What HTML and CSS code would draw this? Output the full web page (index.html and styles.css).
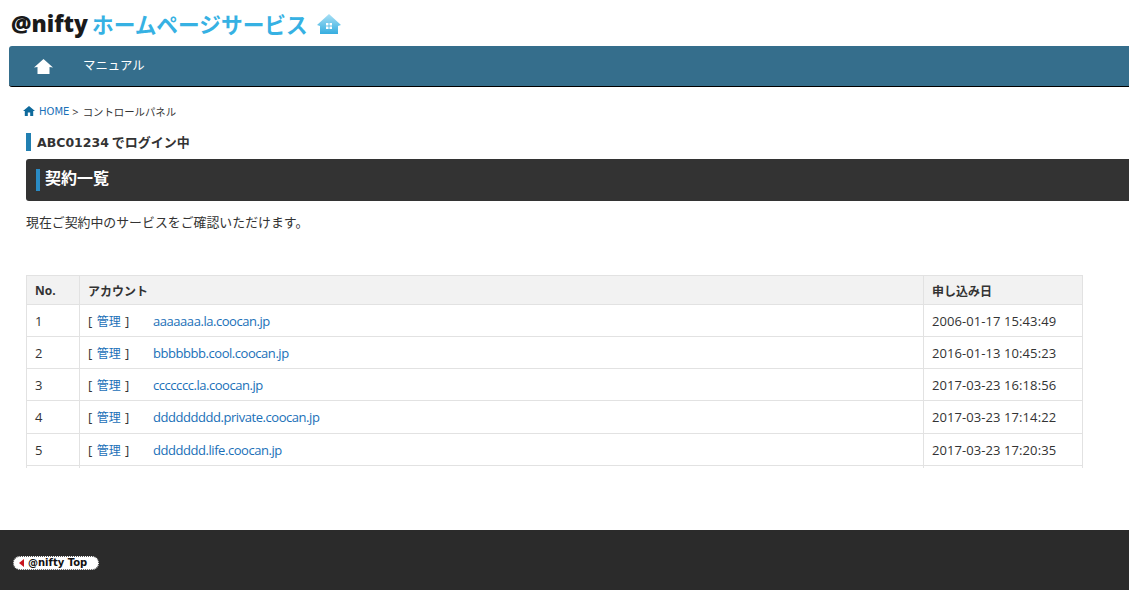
FILE: index.html
```html
<!DOCTYPE html>
<html lang="ja">
<head>
<meta charset="utf-8">
<title>コントロールパネル</title>
<link rel="stylesheet" href="styles.css">
</head>
<body>
<header class="logo">
  <span class="logo-nifty">@nifty</span>
  <span class="logo-service">ホームページサービス</span>
  <svg class="logo-house" width="24" height="20" viewBox="0 0 24 20">
    <defs><linearGradient id="lg" x1="0" y1="0" x2="0" y2="1"><stop offset="0" stop-color="#a9e0f5"/><stop offset="1" stop-color="#36aee0"/></linearGradient></defs>
    <path d="M12 0 L24 11 L21 12 L21 20 L3 20 L3 12 L0 11 Z" fill="url(#lg)"/>
    <path d="M9 9h6v6H9z" fill="#fff"/>
    <path d="M12 9v6M9 12h6" stroke="#5fbfe6" stroke-width="1"/>
  </svg>
</header>
<nav class="nav">
  <svg class="nav-home" width="19" height="15" viewBox="0 0 19 15"><path d="M9.5 0 L19 8.5 L15.5 8 L15.5 15 L3.5 15 L3.5 8 L0 8.5 Z" fill="#fff"/></svg>
  <a class="nav-link">マニュアル</a>
</nav>
<div class="crumbs">
  <svg class="crumb-home" width="12" height="10" viewBox="0 0 12 10"><path d="M6 0 L12 5 L10.2 5 L10.2 10 L7.2 10 L7.2 6.5 L4.8 6.5 L4.8 10 L1.8 10 L1.8 5 L0 5 Z" fill="#0f6a9c"/></svg>
  <a class="crumb-link">HOME</a><span class="crumb-sep">&gt;</span><span class="crumb-rest">コントロールパネル</span>
</div>
<main class="main">
  <h3 class="login"><span class="login-id">ABC01234</span> でログイン中</h3>
  <h2 class="title"><span class="title-text">契約一覧</span></h2>
  <p class="lead">現在ご契約中のサービスをご確認いただけます。</p>
  <table class="list">
    <thead>
      <tr><th class="c-no">No.</th><th>アカウント</th><th class="c-date">申し込み日</th></tr>
    </thead>
    <tbody>
      <tr><td>1</td><td><span class="manage">[ <a>管理</a> ]</span><a class="domain">aaaaaaa.la.coocan.jp</a></td><td class="date">2006-01-17 15:43:49</td></tr>
      <tr><td>2</td><td><span class="manage">[ <a>管理</a> ]</span><a class="domain">bbbbbbb.cool.coocan.jp</a></td><td class="date">2016-01-13 10:45:23</td></tr>
      <tr><td>3</td><td><span class="manage">[ <a>管理</a> ]</span><a class="domain">ccccccc.la.coocan.jp</a></td><td class="date">2017-03-23 16:18:56</td></tr>
      <tr class="row-tall"><td>4</td><td><span class="manage">[ <a>管理</a> ]</span><a class="domain">ddddddddd.private.coocan.jp</a></td><td class="date">2017-03-23 17:14:22</td></tr>
      <tr><td>5</td><td><span class="manage">[ <a>管理</a> ]</span><a class="domain">ddddddd.life.coocan.jp</a></td><td class="date">2017-03-23 17:20:35</td></tr>
      <tr class="tail"><td></td><td></td><td></td></tr>
    </tbody>
  </table>
</main>
<footer class="footer">
  <a class="top-btn"><span class="top-arrow"></span>@nifty Top</a>
</footer>
</body>
</html>
```
FILE: styles.css
```css
* { box-sizing: border-box; }
html, body { margin: 0; padding: 0; }
body {
  width: 1129px;
  height: 590px;
  overflow: hidden;
  background: #fff;
  color: #333;
  font-family: "Open Sans", "Noto Sans CJK JP", sans-serif;
  font-size: 13px;
}
.logo {
  height: 46px;
  padding: 2px 0 0 11px;
  display: flex;
  align-items: center;
}
.logo-nifty {
  font-family: "Open Sans", "Liberation Sans", sans-serif;
  font-weight: 800;
  font-size: 22.8px;
  line-height: 30px;
  color: #1a1a1a;
}
.logo-service {
  font-family: "Noto Sans CJK JP", sans-serif;
  font-weight: 700;
  font-size: 21.7px;
  line-height: 30px;
  color: #36b1e3;
  margin-left: 4px;
}
.logo-house { margin-left: 9px; }
.nav {
  margin-left: 9px;
  height: 41px;
  background: #356e8c;
  border-bottom: 1px solid #000;
  border-radius: 3px 0 0 3px;
  display: flex;
  align-items: center;
  padding: 0 0 2px 25px;
}
.nav-home { margin-top: 3px; }
.nav-link {
  margin-left: 30px;
  color: #fff;
  font-family: "Noto Sans CJK JP", sans-serif;
  font-size: 12.4px;
  line-height: 18px;
}
.crumbs {
  margin: 16px 0 0 23px;
  height: 16px;
  display: flex;
  align-items: center;
  color: #333;
}
.crumb-home { margin-right: 4px; }
.crumb-link { color: #1a70b8; font-family: "DejaVu Sans", sans-serif; font-size: 10px; }
.crumb-sep { margin: 0 4px 0 3px; font-size: 11px; }
.crumb-rest {
  font-family: "Noto Sans CJK JP", sans-serif;
  font-size: 10.4px;
}
.main { margin: 14px 0 0 26px; }
.login {
  margin: 0;
  height: 18px;
  line-height: 18px;
  border-left: 5px solid #217fb1;
  padding-left: 6px;
  font-size: 13px;
  font-weight: 700;
  color: #333;
  font-family: "Noto Sans CJK JP", sans-serif;
}
.login-id { font-family: "DejaVu Sans", sans-serif; font-size: 12.5px; }
.title {
  margin: 8px 0 0;
  height: 42px;
  background: #333;
  border-radius: 3px 0 0 3px;
  padding: 10px 0 0 10px;
}
.title-text {
  display: block;
  height: 22px;
  line-height: 17px;
  border-left: 4px solid #2a8bc4;
  padding-left: 5px;
  color: #fff;
  font-size: 16px;
  font-weight: 700;
  font-family: "Noto Sans CJK JP", sans-serif;
}
.lead {
  margin: 0;
  padding-top: 12px;
  height: 74px;
  font-size: 12.9px;
  line-height: 18px;
  font-family: "Noto Sans CJK JP", sans-serif;
}
.list {
  width: 1057px;
  table-layout: fixed;
  border-collapse: collapse;
}
.list th, .list td {
  border: 1px solid #e2e2e2;
  padding: 0 8px;
  text-align: left;
  vertical-align: middle;
}
.list th {
  background: #f2f2f2;
  height: 29px;
  font-weight: 700;
  font-size: 12px;
  color: #333;
  font-family: "Noto Sans CJK JP", sans-serif;
}
.list td { height: 32px; }
.list .row-tall td { height: 33px; }
.list .tail td { height: 2px; padding: 0; border-bottom: 0; font-size: 0; line-height: 0; }
.list th.c-no { width: 53px; font-family: "Open Sans", sans-serif; font-size: 12px; }
.c-date { width: 159px; }
.list a { color: #1a70b8; }
.manage { display: inline-block; width: 65px; }
.manage a { font-family: "Noto Sans CJK JP", sans-serif; font-size: 12px; margin: 0 1px; }
.domain { letter-spacing: -0.45px; }
.date { letter-spacing: 0.08px; }
.footer {
  margin-top: 62px;
  height: 60px;
  background: #2b2b2b;
  padding: 26px 0 0 13px;
}
.top-btn {
  display: flex;
  align-items: center;
  width: 86px;
  height: 14px;
  background: #fff;
  border: 1px dotted #555;
  border-radius: 7px;
  padding-left: 5px;
  color: #111;
  font-size: 10px;
  font-weight: 700;
  font-family: "DejaVu Sans", sans-serif;
}
.top-arrow {
  width: 0;
  height: 0;
  border-style: solid;
  border-width: 4px 5px 4px 0;
  border-color: transparent #c8141c transparent transparent;
  margin-right: 4px;
}
```
